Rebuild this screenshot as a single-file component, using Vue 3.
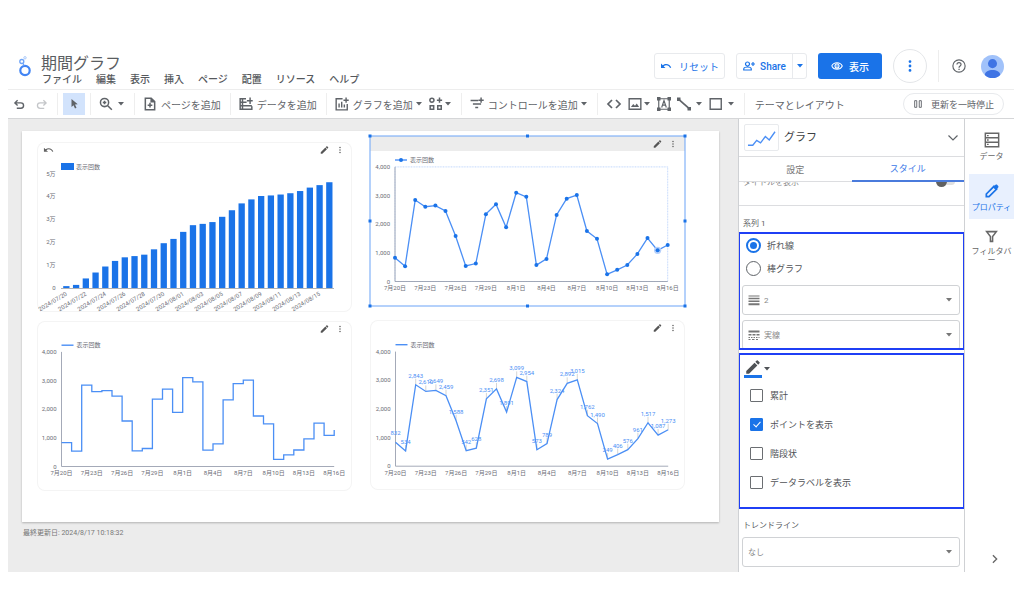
<script setup>
import { h, ref } from 'vue'

const icons = {
  undo: { s: 'M7 19h7.500a5 5 0 0 0 0-10H4M8.500 4L3.500 9l5 5', w: 2.6 },
  redo: { s: 'M17 19H9.500a5 5 0 0 1 0-10H20M15.500 4l5 5-5 5', w: 2.4 },
  reset: { f: 'M12.500 8c-2.650 0-5.050.990-6.900 2.600L2 7v9h9l-3.620-3.620c1.390-1.160 3.160-1.880 5.120-1.880 3.540 0 6.550 2.310 7.600 5.500l2.370-.780C21.080 11.030 17.150 8 12.500 8z' },
  pointer: { f: 'M7 2v16l4-3.500 3 6.500 3-1.400-3-6.400 5.500-.5z' },
  zoom: { s: 'M15 15l7 7M9.500 2.500a7 7 0 1 0 0 14a7 7 0 1 0 0-14M9.500 6.500v6M6.500 9.500h6', w: 2.6 },
  page: { s: 'M14 2H4v20h16V8zM14 2v6h6M12 10v8M8 14h8', w: 2.6 },
  data: { s: 'M12 3H2v18h20v-5M2 9h11M2 15h20M6 3v18M19 1v11M13.500 6.500h10', w: 2.5 },
  chart: { s: 'M13 3H2v19h19V12M7 11v7M11.500 8v10M16 13v5M19 1v9M14.500 5.500h9', w: 2.4 },
  blocks: { s: 'M5 2a3.500 3.500 0 1 0 0 7a3.500 3.500 0 1 0 0-7M2 15h6v6H2zM15 15h6v6h-6zM18 1v9M13.500 5.500h9', w: 2.6 },
  control: { s: 'M1 6h13M5 12h14M9 18h5M19 1v9M14.500 5.500h9', w: 2.5 },
  code: { s: 'M9 6l-6 6 6 6M15 6l6 6-6 6', w: 2.6 },
  image: { s: 'M2 3h20v18H2z', w: 2.4, f: 'M5 17l4-5 3 3 3-4 4 6z' },
  text: { s: 'M3 3h18v18H3zM8 18l4-12 4 12M9.500 14h5', w: 2, f: 'M0 0h6v6H0zM18 0h6v6h-6zM0 18h6v6H0zM18 18h6v6h-6z' },
  line: { s: 'M3 4l18 16', w: 3, f: 'M0 1h6v6H0zM18 17h6v6h-6z' },
  square: { s: 'M2 3h19v18H2z', w: 2.4 },
  pause: { s: 'M4 4h5v16H4zM15 4h5v16h-5z', w: 2.2 },
  person: { s: 'M9 4a4 4 0 1 0 0 8a4 4 0 1 0 0-8M1.500 20v-2c0-3 4-4 7.500-4s7.500 1 7.500 4v2zM20 4v8M16 8h8', w: 2.4 },
  eye: { s: 'M1.500 12c4-8.500 17-8.500 21 0c-4 8.500-17 8.500-21 0M12 8a4 4 0 1 0 0 8a4 4 0 1 0 0-8', w: 2.2, f: 'M12 10.500a1.500 1.500 0 1 0 0 3a1.500 1.500 0 1 0 0-3' },
  dots: { f: 'M12 2a2.400 2.400 0 1 0 0 4.800a2.400 2.400 0 1 0 0-4.800M12 9.600a2.400 2.400 0 1 0 0 4.800a2.400 2.400 0 1 0 0-4.800M12 17.200a2.400 2.400 0 1 0 0 4.800a2.400 2.400 0 1 0 0-4.800' },
  help: { s: 'M12 1.500a10.500 10.500 0 1 0 0 21a10.500 10.500 0 1 0 0-21M8.500 9.500c0-4.500 7-4.500 7 0c0 2.500-3.500 2.500-3.500 5.500', w: 2, f: 'M11 16.500h2.200v2.200H11z' },
  pencil: { f: 'M3 17.250V21h3.750L17.810 9.940l-3.750-3.750L3 17.250zM20.710 7.040a1 1 0 0 0 0-1.410l-2.340-2.340a1 1 0 0 0-1.410 0l-1.830 1.830 3.750 3.750 1.830-1.830z' },
  pencilLine: { s: 'M3.500 20.500v-4L15 5l4 4L7.500 20.500z', w: 2.6, f: 'M13.500 6.500l3.500-3.500c1-1 2-1 3 0l1 1c1 1 1 2 0 3l-3.500 3.500z' },
  down: { s: 'M3 7l9 9 9-9', w: 2.4 },
  right: { s: 'M7 3l9 9-9 9', w: 3.2 },
  table: { s: 'M2 2h20v20H2zM2 8.700h20M2 15.300h20', w: 2.2, f: 'M4.500 4.500h2.500v2H4.500zM4.500 11h2.500v2H4.500zM4.500 17.500h2.500v2H4.500z' },
  funnel: { s: 'M3 3h18l-7 9v9h-4v-9z', w: 2.8 },
  weight: { f: 'M1 3h22v2H1zM1 7.500h22v3H1zM1 13h22v3H1zM1 18.500h22v4H1z' },
  dash: { f: 'M1 3h22v4H1zM1 10h6v3H1zM9 10h6v3H9zM17 10h6v3h-6zM1 16h3v2H1zM6 16h3v2H6zM11 16h3v2h-3zM16 16h3v2h-3zM21 16h2v2h-2zM1 20h4v2H1zM8 20h5v2H8zM16 20h4v2h-4z' }
}

const Icon = (props) => {
  const i = icons[props.name]
  return h('svg', { viewBox: '0 0 24 24', 'aria-hidden': 'true' }, [
    i.s && h('path', { d: i.s, fill: 'none', stroke: 'currentColor', 'stroke-width': i.w }),
    i.f && h('path', { d: i.f, fill: 'currentColor' })
  ])
}
Icon.props = ['name']

const Caret = () =>
  h('svg', { viewBox: '0 0 8 8', 'aria-hidden': 'true' }, [h('path', { d: 'M1 2h6L4 5.500z', fill: 'currentColor' })])

const menus = ['ファイル', '編集', '表示', '挿入', 'ページ', '配置', 'リソース', 'ヘルプ']

const views = [832, 534, 2843, 2610, 2649, 2459, 1588, 542, 628, 2351, 2698, 1891, 3099, 2954,
  573, 789, 2324, 2892, 3015, 1762, 1490, 249, 406, 576, 961, 1517, 1087, 1273]
const days = ['7月20日', '7月23日', '7月26日', '7月29日', '8月1日', '8月4日', '8月7日', '8月10日', '8月13日', '8月16日']
const barDays = ['07/20', '07/22', '07/24', '07/26', '07/28', '07/30', '08/01', '08/03', '08/05', '08/07',
  '08/09', '08/11', '08/13', '08/15'].map((d) => '2024/' + d)

let total = 0
const bars = views.map((v, i) => {
  total += v
  const height = (total / 10000) * 22.7
  return { x: 26.2 + i * 9.74, y: 146 - height, height }
})

const STEP = 10.1
function lineChart(kind, x0, base) {
  const pts = views.map((v, i) => ({ x: x0 + i * STEP, y: base - (v / 1000) * 28.65, v: v.toLocaleString('en-US') }))
  let path = ''
  pts.forEach((p, i) => {
    if (i === 0) path += `M${p.x} ${p.y}`
    else if (kind === 'step') path += `H${p.x}V${p.y}`
    else path += `L${p.x} ${p.y}`
  })
  return { kind, x0, base, top: base - 114.6, right: x0 + 27 * STEP, pts, path }
}

const columns = [
  [{ kind: 'bar', x0: 24, base: 146, top: 31.5 }, lineChart('step', 24.5, 145.5)],
  [lineChart('points', 25, 145.5), lineChart('labels', 25.5, 146.2)]
]
const legendY = { bar: 24.5, step: 24.2, points: 24, labels: 24.7 }
const handles = [0, 157.5, 315].flatMap((x) => [0, 85, 170].map((y) => [x, y])).filter(([x, y]) => x !== 157.5 || y !== 85)

const series = ref('line')
const options = ref([
  { label: '累計', on: false },
  { label: 'ポイントを表示', on: true },
  { label: '階段状', on: false },
  { label: 'データラベルを表示', on: false }
])
</script>

<template>
  <div class="app">
    <header class="header">
      <svg class="logo" viewBox="0 0 14 22" aria-hidden="true">
        <circle cx="7" cy="15.500" r="4.700" fill="none" stroke="#4285f4" stroke-width="2.200" />
        <circle cx="3.800" cy="6.500" r="2" fill="none" stroke="#6fa5f8" stroke-width="1.300" />
        <circle cx="7" cy="2.800" r="1.200" fill="none" stroke="#a8c8fb" stroke-width="1" />
        <path d="M5 8.300l1 2.500" stroke="#6fa5f8" stroke-width="1.200" />
      </svg>
      <div class="titles">
        <h1>期間グラフ</h1>
        <nav class="menus"><button v-for="m in menus" :key="m">{{ m }}</button></nav>
      </div>
      <div class="actions">
        <button class="outlined reset"><Icon name="reset" class="i12" />リセット</button>
        <div class="outlined share">
          <button class="share-main"><Icon name="person" class="i12" />Share</button>
          <button class="share-more" aria-label="Share options"><Caret class="caret" /></button>
        </div>
        <button class="primary"><Icon name="eye" class="i12" />表示</button>
        <button class="round" aria-label="More"><Icon name="dots" class="i14" /></button>
        <span class="divider"></span>
        <button class="help" aria-label="Help"><Icon name="help" class="i14" /></button>
        <button class="avatar" aria-label="Account">
          <svg viewBox="0 0 24 24" aria-hidden="true">
            <clipPath id="face"><circle cx="12" cy="12" r="12" /></clipPath>
            <g clip-path="url(#face)">
              <rect width="24" height="24" fill="#a1c2fa" />
              <circle cx="12" cy="9" r="4.700" fill="#3f74e4" />
              <path d="M4 21c0-7 16-7 16 0l-3 3H7z" fill="#3f74e4" />
            </g>
          </svg>
        </button>
      </div>
    </header>

    <div class="toolbar">
      <div class="group history">
        <button aria-label="Undo"><Icon name="undo" class="i13" /></button>
        <button class="faded" aria-label="Redo"><Icon name="redo" class="i13" /></button>
      </div>
      <div class="group select-tool"><button aria-label="Select"><Icon name="pointer" class="i12" /></button></div>
      <div class="group"><button class="wide" aria-label="Zoom"><Icon name="zoom" class="i14" /><Caret class="caret" /></button></div>
      <div class="group"><button><Icon name="page" class="i14" />ページを追加</button></div>
      <div class="group"><button><Icon name="data" class="i14" />データを追加</button></div>
      <div class="group">
        <button><Icon name="chart" class="i14" />グラフを追加<Caret class="caret" /></button>
        <button class="tight" aria-label="Community"><Icon name="blocks" class="i14" /><Caret class="caret" /></button>
      </div>
      <div class="group"><button><Icon name="control" class="i14" />コントロールを追加<Caret class="caret" /></button></div>
      <div class="group">
        <button aria-label="Embed"><Icon name="code" class="i16" /></button>
        <button class="tight" aria-label="Image"><Icon name="image" class="i14" /><Caret class="caret" /></button>
        <button aria-label="Text"><Icon name="text" class="i14" /></button>
        <button class="wide" aria-label="Line"><Icon name="line" class="i14" /><Caret class="caret" /></button>
        <button class="wide" aria-label="Shape"><Icon name="square" class="i14" /><Caret class="caret" /></button>
      </div>
      <div class="group theme"><button>テーマとレイアウト</button></div>
      <button class="pill"><Icon name="pause" class="i10" />更新を一時停止</button>
    </div>

    <main class="work">
      <section class="canvas">
        <div class="report">
          <div v-for="(col, ci) in columns" :key="ci" class="col">
            <div v-for="c in col" :key="c.kind" class="card" :class="{ selected: c.kind === 'points' }">
              <svg viewBox="0 0 315 170" class="plot" role="img" aria-label="表示回数">
                <g v-if="c.kind === 'points'">
                  <rect width="315" height="15" fill="#ececec" />
                  <rect :x="c.x0" :y="c.top" :width="c.right - c.x0" height="114.600" fill="none" stroke="#a9c7fa" stroke-width=".7" stroke-dasharray="1 .6" />
                </g>
                <svg v-if="c.kind === 'bar'" x="6" y="2.500" width="11" height="11" viewBox="0 0 24 24"><path :d="icons.reset.f" fill="#616161" /></svg>
                <svg x="282.500" y="3" width="10" height="10" viewBox="0 0 24 24"><path :d="icons.pencil.f" fill="#555" /></svg>
                <svg x="299" y="4" width="8" height="8" viewBox="0 0 24 24"><path :d="icons.dots.f" fill="#666" /></svg>

                <rect v-if="c.kind === 'bar'" x="24" y="21" width="13" height="7" fill="#1a73e8" />
                <path v-else :d="`M${c.x0} ${legendY[c.kind]}h12`" stroke="#4b8ff5" stroke-width="1.400" />
                <circle v-if="c.kind === 'points'" :cx="c.x0 + 6" :cy="legendY.points" r="2" fill="#1a73e8" />
                <text :x="c.x0 + 15" :y="legendY[c.kind] + 2.200">表示回数</text>

                <text v-for="n in (c.kind === 'bar' ? 6 : 5)" :key="n" text-anchor="end"
                  :x="c.kind === 'bar' ? 18.500 : c.x0 - 5"
                  :y="c.base + 2 - (n - 1) * (c.kind === 'bar' ? 22.900 : 28.650)">{{ n === 1 ? '0' : c.kind === 'bar' ? (n - 1) + '万' : (n - 1) + ',000' }}</text>

                <template v-if="c.kind === 'bar'">
                  <path d="M24 146.500h273" stroke="#9aa0a6" stroke-width=".8" />
                  <rect v-for="(b, i) in bars" :key="i" :x="b.x" :y="b.y" width="6.300" :height="b.height" fill="#1a73e8" />
                  <text v-for="(d, i) in barDays" :key="d" text-anchor="end"
                    :transform="`translate(${30.5 + i * 19.48} 153) rotate(-31)`">{{ d }}</text>
                </template>
                <template v-else>
                  <path :d="`M${c.x0} ${c.top}V${c.base}H${c.right}`" fill="none" stroke="#9aa0b0" stroke-width=".9" />
                  <path v-if="c.kind === 'labels'" :d="c.pts.map((p) => `M${p.x} ${p.y}v-6`).join('')" stroke="#aaa" stroke-width=".5" />
                  <path :d="c.path" fill="none" stroke="#4b8ff5" stroke-width="1.300" />
                  <text v-for="(d, i) in days" :key="d" text-anchor="middle" :x="c.x0 + i * 30.300" :y="c.base + 8.700">{{ d }}</text>
                  <template v-if="c.kind === 'points'">
                    <circle :cx="c.pts[26].x" :cy="c.pts[26].y" r="3.600" fill="#b5d0fb" />
                    <circle v-for="(p, i) in c.pts" :key="i" :cx="p.x" :cy="p.y" r="2" fill="#1a73e8" />
                    <rect width="315" height="170" fill="none" stroke="#6ba3f7" />
                    <rect v-for="(q, i) in handles" :key="'h' + i" :x="q[0] - 1.5" :y="q[1] - 1.5" width="3" height="3" fill="#1a73e8" />
                  </template>
                  <template v-if="c.kind === 'labels'">
                    <text v-for="(p, i) in c.pts" :key="i" class="value" text-anchor="middle" :x="p.x" :y="p.y - 7">{{ p.v }}</text>
                  </template>
                </template>
              </svg>
            </div>
          </div>
        </div>
        <p class="updated">最終更新日: 2024/8/17 10:18:32</p>
      </section>

      <aside class="panel">
        <div class="panel-head">
          <span class="thumb">
            <svg viewBox="0 0 30 18" aria-hidden="true"><path d="M1 15.500h5l4-5 4 2.500 5-6.500 4 3.500 6-8.500" fill="none" stroke="#4b8ff5" stroke-width="1.400" /></svg>
          </span>
          <h2>グラフ</h2>
          <button aria-label="Expand"><Icon name="down" class="i12" /></button>
        </div>
        <div class="tabs" role="tablist">
          <button role="tab">設定</button>
          <button role="tab" class="active" aria-selected="true">スタイル</button>
        </div>
        <div class="settings">
          <label class="toggle-row">タイトルを表示<input type="checkbox" role="switch" class="switch" /></label>
          <h3 class="series">系列 1</h3>
          <div class="marked first">
            <label class="choice"><input v-model="series" type="radio" name="series" value="line" />折れ線</label>
            <label class="choice"><input v-model="series" type="radio" name="series" value="bar" />棒グラフ</label>
            <div class="field">
              <Icon name="weight" class="i12" />
              <select aria-label="線の太さ"><option>2</option></select>
              <Caret class="caret" />
            </div>
            <div class="field">
              <Icon name="dash" class="i12" />
              <select aria-label="線の種類"><option>実線</option></select>
              <Caret class="caret" />
            </div>
          </div>
          <div class="marked second">
            <button class="color" aria-label="線の色"><span><Icon name="pencil" class="i18" /></span><Caret class="caret" /></button>
            <label v-for="o in options" :key="o.label" class="check"><input v-model="o.on" type="checkbox" />{{ o.label }}</label>
          </div>
          <h3 class="trend">トレンドライン</h3>
          <div class="field">
            <select aria-label="トレンドライン"><option>なし</option></select>
            <Caret class="caret" />
          </div>
        </div>
      </aside>

      <nav class="rail">
        <button><Icon name="table" class="i16" />データ</button>
        <button class="active"><Icon name="pencilLine" class="i16" />プロパティ</button>
        <button><Icon name="funnel" class="i13" /><span>フィルタバ<br />ー</span></button>
        <button class="collapse" aria-label="Collapse"><Icon name="right" class="i10" /></button>
      </nav>
    </main>
  </div>
</template>

<style>
body { background: #fff; }
</style>

<style scoped>
.app {
  box-sizing: border-box;
  padding: 42px 10px 0 8px;
  font-family: Roboto, "Noto Sans CJK JP", sans-serif;
  color: #5f6368;
}
.app *, .app *::before, .app *::after { box-sizing: border-box; }
h1, h2, h3, p { margin: 0; font-weight: 400; }
button {
  display: flex;
  align-items: center;
  border: 0;
  padding: 0;
  background: none;
  font: inherit;
  color: inherit;
  white-space: nowrap;
  cursor: pointer;
}
svg { flex: none; display: block; }
.i10 { width: 10px; height: 10px; }
.i12 { width: 12px; height: 12px; }
.i13 { width: 13px; height: 13px; }
.i14 { width: 14px; height: 14px; }
.i16 { width: 16px; height: 16px; }
.i18 { width: 18px; height: 18px; }
.caret { width: 8px; height: 8px; }

.header {
  display: flex;
  align-items: center;
  height: 48px;
  padding: 0 10px;
  border-bottom: 1px solid #ededed;
}
.logo { width: 14px; height: 22px; }
.titles { padding: 8px 0 0 9px; }
h1 { font-size: 16px; line-height: 20px; color: #5a5d61; }
.menus { display: flex; gap: 14px; padding-left: 1px; font-size: 10px; line-height: 12px; color: #55585c; font-weight: 500; }
.actions { display: flex; align-items: center; margin-left: auto; padding-top: 1px; font-size: 10px; font-weight: 500; color: #1a73e8; }
.outlined { display: flex; height: 26px; border: 1px solid #e8eaed; border-radius: 3px; margin-right: 11px; }
.reset { width: 71px; justify-content: center; gap: 7px; font-weight: 400; }
.share { width: 71px; }
.share-main { flex: 1; justify-content: center; gap: 5px; }
.share-more { width: 14px; justify-content: center; border-left: 1px solid #e8eaed; }
.primary { height: 26px; width: 64px; justify-content: center; gap: 6px; border-radius: 3px; background: #1a73e8; color: #fff; margin-right: 11px; }
.round { width: 34px; height: 34px; justify-content: center; border: 1px solid #e4e6e9; border-radius: 50%; }
.divider { width: 1px; height: 32px; margin: 0 13px 0 11px; background: #ededed; }
.help { color: #5f6368; margin-right: 15px; }
.avatar svg { width: 23px; height: 23px; }

.toolbar {
  display: flex;
  align-items: center;
  height: 29px;
  padding-right: 10px;
  border-bottom: 1px solid #d5d6d8;
  font-size: 10px;
  color: #5f6368;
}
.group { display: flex; align-items: center; gap: 6px; height: 22px; padding: 0 9px 0 8px; border-right: 1px solid #eee; }
.group button { gap: 4px; }
.group .caret { margin-left: -2px; }
.group .wide .caret { margin-left: 0; }
.group .tight { gap: 3px; }
.history { gap: 0; padding: 0 5px 0 0; }
.history button { width: 22px; height: 22px; justify-content: center; }
.group .faded { color: #c4c6c9; }
.select-tool { padding: 0 5px; }
.select-tool button { width: 22px; height: 22px; justify-content: center; background: #d2e3fc; }
.theme { padding: 0 10px; border: 0; }
.pill { height: 22px; margin-left: auto; padding: 0 9px; gap: 8px; border: 1px solid #e8eaed; border-radius: 11px; font-size: 9px; }

.work { display: flex; height: 453px; }
.canvas { flex: 1; min-width: 0; padding: 12px 20px 0 14px; background: #ececec; }
.report { display: flex; gap: 18px; padding: 11px 34px 31px 15px; background: #fff; box-shadow: 0 1px 2px rgba(0, 0, 0, .25); }
.col { flex: 1; min-width: 0; display: flex; flex-direction: column; gap: 9px; }
.col + .col { margin-top: -6px; gap: 14px; }
.card { border-radius: 8px; box-shadow: inset 0 0 0 1px #f4f4f4; }
.card.selected { border-radius: 0; box-shadow: none; }
.plot { width: 100%; height: auto; overflow: visible; }
.plot text { font-size: 6px; fill: #6b6d76; }
.plot text.value { fill: #4b8ff5; }
.updated { padding: 6px 0 0 1px; font-size: 7px; line-height: 10px; color: #777; }

.panel { width: 227px; margin-left: -1px; border: 1px solid #cfd1d4; border-width: 0 1px; background: #fff; overflow: hidden; }
.panel-head { display: flex; align-items: center; height: 38px; padding: 0 5px; border-bottom: 1px solid #dcdde0; }
.thumb { width: 35px; height: 27px; padding: 5px 2px 2px; border: 1px solid #e8eaed; border-radius: 2px; }
.thumb svg { width: 29px; height: 18px; }
h2 { flex: 1; padding-left: 5px; font-size: 11px; line-height: 16px; color: #3c4043; }
.tabs { display: flex; height: 25px; border-bottom: 1px solid #dcdde0; font-size: 9px; }
.tabs button { flex: 1; height: 25px; justify-content: center; color: #777; }
.tabs .active { color: #3b78e7; border-bottom: 2px solid #4a7bdc; }
.settings { height: 390px; overflow: hidden; font-size: 9px; color: #4f5256; }
.toggle-row { display: flex; align-items: center; height: 34px; margin-top: -10px; padding: 0 9px 15px 4px; border-bottom: 1px solid #dcdde0; font-size: 8px; color: #888; }
.switch { appearance: none; position: relative; width: 18px; height: 7px; margin: 0 0 0 auto; border-radius: 4px; background: #e0e0e0; }
.switch::after { content: ""; position: absolute; left: -1px; top: -2px; width: 11px; height: 11px; border-radius: 50%; background: #616161; }
h3 { padding-left: 4px; font-size: 8px; line-height: 12px; color: #5a5d61; }
.series { padding-top: 12px; }
.marked { position: relative; padding: 0 4px 0 3px; }
.marked::after { content: ""; position: absolute; inset: 0 -1px; border: 2px solid #1f3ff5; pointer-events: none; }
.first { height: 118px; margin-top: 2px; padding-top: 2px; }
.second { height: 156px; margin-top: 3px; padding-top: 7px; }
.choice { display: flex; align-items: center; gap: 6px; height: 23px; padding-left: 4px; }
input[type="radio"] { appearance: none; display: grid; place-items: center; width: 15px; height: 15px; margin: 0; border: 1px solid #5f6368; border-radius: 50%; }
input[type="radio"]:checked { border: 2px solid #1a73e8; }
input[type="radio"]:checked::after { content: ""; width: 7px; height: 7px; border-radius: 50%; background: #1a73e8; }
.field { display: flex; align-items: center; height: 30px; padding: 0 6px 0 5px; border: 1px solid #d0d2d5; border-radius: 3px; color: #777; }
.first .field { margin-top: 5px; }
.settings > .field { margin: 5px 4px 0 3px; padding-left: 1px; }
select { appearance: none; flex: 1; min-width: 0; height: 24px; border: 0; padding: 0 4px; background: none; font: inherit; font-size: 8px; color: #888; }
.color { gap: 1px; padding-left: 2px; }
.color span { border-bottom: 3px solid #1a73e8; height: 18px; }
.color .i18 { margin-top: -2px; }
.check { display: flex; align-items: center; gap: 7px; height: 29px; padding-left: 8px; }
.color + .check { margin-top: 3px; }
.check input { appearance: none; position: relative; width: 13px; height: 13px; margin: 0; border: 1px solid #6b6e72; border-radius: 1px; }
.check input:checked { border-color: #1a73e8; background: #1a73e8; }
.check input:checked::after { content: ""; position: absolute; left: 4px; top: 1px; width: 4px; height: 7px; border: solid #fff; border-width: 0 1px 1px 0; transform: rotate(42deg); }
.trend { padding-top: 11px; }

.rail { display: flex; flex-direction: column; width: 49px; padding-left: 4px; font-size: 8px; line-height: 9px; color: #666; overflow: hidden; }
.rail button { flex-direction: column; justify-content: flex-start; gap: 4px; height: 45px; padding-top: 9px; }
.rail button:first-child { margin: 4px 0 6px; }
.rail .active { background: #e8f0fe; color: #1a73e8; }
.rail .active + button { margin-top: 2px; text-align: center; }
.rail .collapse { height: 30px; margin-top: auto; padding: 12px 0 0 6px; }
</style>
